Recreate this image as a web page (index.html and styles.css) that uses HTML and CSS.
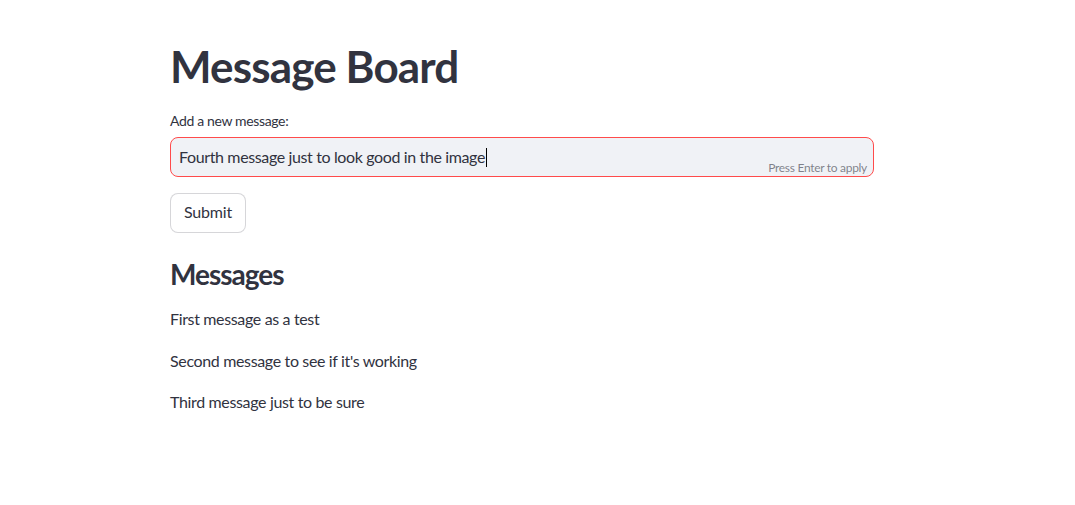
FILE: index.html
```html
<!DOCTYPE html>
<html>
<head>
<meta charset="utf-8">
<link rel="stylesheet" href="styles.css">
</head>
<body>
<main class="main">
  <h1 class="title">Message Board</h1>
  <div class="field">
    <label class="label">Add a new message:</label>
    <div class="input">
      <span class="input-text">Fourth message just to look good in the image<span class="caret"></span></span>
      <span class="hint">Press Enter to apply</span>
    </div>
  </div>
  <div class="btn-row"><button class="btn">Submit</button></div>
  <h3 class="subtitle">Messages</h3>
  <p class="msg">First message as a test</p>
  <p class="msg">Second message to see if it's working</p>
  <p class="msg">Third message just to be sure</p>
</main>
</body>
</html>
```
FILE: styles.css
```css
html, body {
  margin: 0;
  padding: 0;
  background: #ffffff;
}
body {
  font-family: Lato, "Noto Sans", sans-serif;
  color: rgb(49, 51, 63);
}
.main {
  width: 704px;
  margin-left: 170px;
  padding-top: 40px;
  display: flex;
  flex-direction: column;
}
.title {
  margin: 0;
  font-size: 44px;
  line-height: 52px;
  font-weight: 700;
  letter-spacing: -0.85px;
}
.field {
  margin-top: 19px;
  display: flex;
  flex-direction: column;
}
.label {
  font-size: 14px;
  line-height: 20px;
  margin-bottom: 6px;
  letter-spacing: -0.35px;
}
.input {
  position: relative;
  height: 40px;
  box-sizing: border-box;
  border: 1px solid rgb(255, 75, 75);
  border-radius: 8px;
  background: rgb(240, 242, 246);
  display: flex;
  align-items: center;
  padding-left: 8px;
}
.input-text {
  font-size: 16px;
  line-height: 24px;
  letter-spacing: -0.37px;
  display: flex;
  align-items: center;
}
.caret {
  display: inline-block;
  width: 1px;
  height: 19px;
  background: #000;
  margin-left: 1px;
}
.hint {
  position: absolute;
  right: 6px;
  bottom: 0;
  font-size: 12px;
  line-height: 16px;
  letter-spacing: -0.3px;
  color: rgba(49, 51, 63, 0.6);
}
.btn-row {
  margin-top: 16px;
  display: flex;
}
.btn {
  font-family: inherit;
  color: inherit;
  font-size: 16px;
  letter-spacing: -0.2px;
  height: 40px;
  padding: 0 13px 3px 13px;
  background: #fff;
  border: 1px solid rgba(49, 51, 63, 0.2);
  border-radius: 8px;
}
.subtitle {
  margin: 24px 0 0 0;
  font-size: 28px;
  line-height: 34px;
  font-weight: 700;
  letter-spacing: -1px;
}
.msg {
  margin: 16px 0 0 0;
  font-size: 16px;
  line-height: 25.6px;
  letter-spacing: -0.35px;
}
.subtitle + .msg {
  margin-top: 15px;
}
```
